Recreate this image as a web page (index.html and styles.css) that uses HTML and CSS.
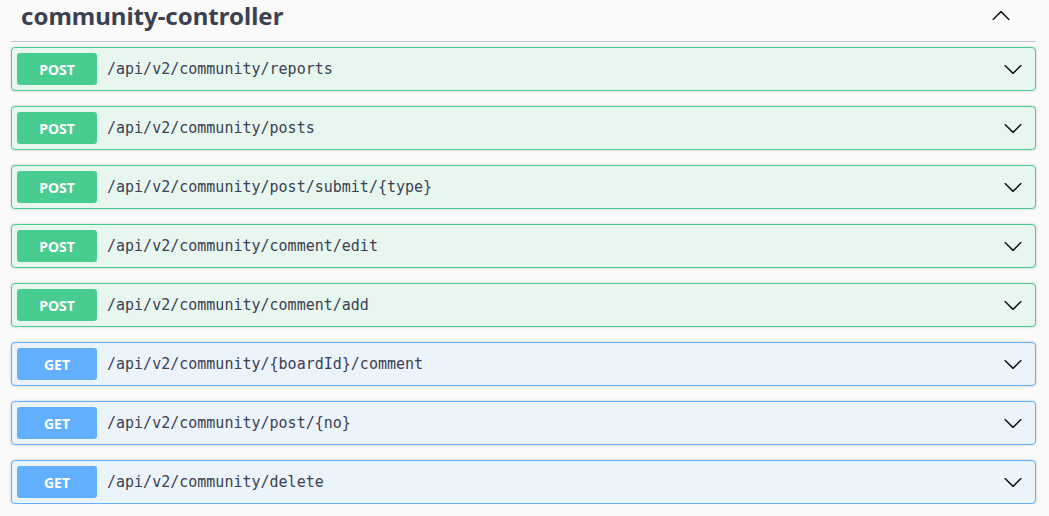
FILE: index.html
```html
<!DOCTYPE html>
<html lang="en">
<head>
<meta charset="utf-8">
<title>community-controller</title>
<link rel="stylesheet" href="styles.css">
</head>
<body>
<div class="tag-section">
  <h4 class="tag-header">
    <span class="tag-name">community-controller</span>
    <svg class="arrow-up" width="20" height="20" viewBox="0 0 20 20"><path d="M17.418 13.891c.272.268.709.268.979 0s.271-.701 0-.969l-7.908-7.83c-.27-.268-.707-.268-.979 0l-7.908 7.830c-.27.268-.27.701 0 .969.271.268.709.268.979 0L10 6.75l7.418 7.141z"/></svg>
  </h4>
  <div class="ops">
    <div class="op op-post"><span class="method">POST</span><span class="path">/api/v2/community/reports</span><svg class="arrow" width="20" height="20" viewBox="0 0 20 20"><path d="M17.418 6.109c.272-.268.709-.268.979 0s.271.701 0 .969l-7.908 7.83c-.27.268-.707.268-.979 0l-7.908-7.83c-.27-.268-.27-.701 0-.969.271-.268.709-.268.979 0L10 13.25l7.418-7.141z"/></svg></div>
    <div class="op op-post"><span class="method">POST</span><span class="path">/api/v2/community/posts</span><svg class="arrow" width="20" height="20" viewBox="0 0 20 20"><path d="M17.418 6.109c.272-.268.709-.268.979 0s.271.701 0 .969l-7.908 7.83c-.27.268-.707.268-.979 0l-7.908-7.83c-.27-.268-.27-.701 0-.969.271-.268.709-.268.979 0L10 13.25l7.418-7.141z"/></svg></div>
    <div class="op op-post"><span class="method">POST</span><span class="path">/api/v2/community/post/submit/{type}</span><svg class="arrow" width="20" height="20" viewBox="0 0 20 20"><path d="M17.418 6.109c.272-.268.709-.268.979 0s.271.701 0 .969l-7.908 7.83c-.27.268-.707.268-.979 0l-7.908-7.83c-.27-.268-.27-.701 0-.969.271-.268.709-.268.979 0L10 13.25l7.418-7.141z"/></svg></div>
    <div class="op op-post"><span class="method">POST</span><span class="path">/api/v2/community/comment/edit</span><svg class="arrow" width="20" height="20" viewBox="0 0 20 20"><path d="M17.418 6.109c.272-.268.709-.268.979 0s.271.701 0 .969l-7.908 7.83c-.27.268-.707.268-.979 0l-7.908-7.83c-.27-.268-.27-.701 0-.969.271-.268.709-.268.979 0L10 13.25l7.418-7.141z"/></svg></div>
    <div class="op op-post"><span class="method">POST</span><span class="path">/api/v2/community/comment/add</span><svg class="arrow" width="20" height="20" viewBox="0 0 20 20"><path d="M17.418 6.109c.272-.268.709-.268.979 0s.271.701 0 .969l-7.908 7.83c-.27.268-.707.268-.979 0l-7.908-7.83c-.27-.268-.27-.701 0-.969.271-.268.709-.268.979 0L10 13.25l7.418-7.141z"/></svg></div>
    <div class="op op-get"><span class="method">GET</span><span class="path">/api/v2/community/{boardId}/comment</span><svg class="arrow" width="20" height="20" viewBox="0 0 20 20"><path d="M17.418 6.109c.272-.268.709-.268.979 0s.271.701 0 .969l-7.908 7.83c-.27.268-.707.268-.979 0l-7.908-7.83c-.27-.268-.27-.701 0-.969.271-.268.709-.268.979 0L10 13.25l7.418-7.141z"/></svg></div>
    <div class="op op-get"><span class="method">GET</span><span class="path">/api/v2/community/post/{no}</span><svg class="arrow" width="20" height="20" viewBox="0 0 20 20"><path d="M17.418 6.109c.272-.268.709-.268.979 0s.271.701 0 .969l-7.908 7.83c-.27.268-.707.268-.979 0l-7.908-7.83c-.27-.268-.27-.701 0-.969.271-.268.709-.268.979 0L10 13.25l7.418-7.141z"/></svg></div>
    <div class="op op-get"><span class="method">GET</span><span class="path">/api/v2/community/delete</span><svg class="arrow" width="20" height="20" viewBox="0 0 20 20"><path d="M17.418 6.109c.272-.268.709-.268.979 0s.271.701 0 .969l-7.908 7.83c-.27.268-.707.268-.979 0l-7.908-7.83c-.27-.268-.27-.701 0-.969.271-.268.709-.268.979 0L10 13.25l7.418-7.141z"/></svg></div>
  </div>
</div>
</body>
</html>
```

FILE: styles.css
```css
html, body {
  margin: 0;
  padding: 0;
  background: #fafafa;
}
body {
  padding: 0 13px 0 11px;
  font-family: "Noto Sans", "Open Sans", sans-serif;
  color: #3b4151;
}
.tag-header {
  display: flex;
  align-items: center;
  justify-content: space-between;
  height: 42px;
  box-sizing: border-box;
  margin: 0 0 5px 0;
  padding: 0 25px 10px 10px;
  border-bottom: 1px solid #c4c6cb;
}
.tag-name {
  font-size: 24px;
  font-weight: 700;
  line-height: 30px;
  color: #3b4151;
}
.arrow-up {
  fill: #111;
}
.ops {
  display: flex;
  flex-direction: column;
  gap: 15px;
}
.op {
  display: flex;
  align-items: center;
  height: 44px;
  box-sizing: border-box;
  padding: 5px 12px 5px 5px;
  border: 1px solid;
  border-radius: 4px;
  box-shadow: 0 0 3px rgba(0,0,0,.19);
}
.op-post {
  background: #e8f6f0;
  border-color: #49cc90;
}
.op-get {
  background: #ebf3fb;
  border-color: #61affe;
}
.method {
  width: 80px;
  height: 32px;
  flex: none;
  display: flex;
  align-items: center;
  justify-content: center;
  border-radius: 3px;
  color: #fff;
  font-size: 14px;
  font-weight: 700;
  font-family: "Noto Sans", sans-serif;
}
.op-post .method { background: #49cc90; }
.op-get .method { background: #61affe; }
.path {
  flex: 1;
  padding: 0 10px;
  font-family: "DejaVu Sans Mono", monospace;
  font-size: 15px;
  color: #3b4151;
}
.arrow {
  flex: none;
  fill: #111;
}
```
